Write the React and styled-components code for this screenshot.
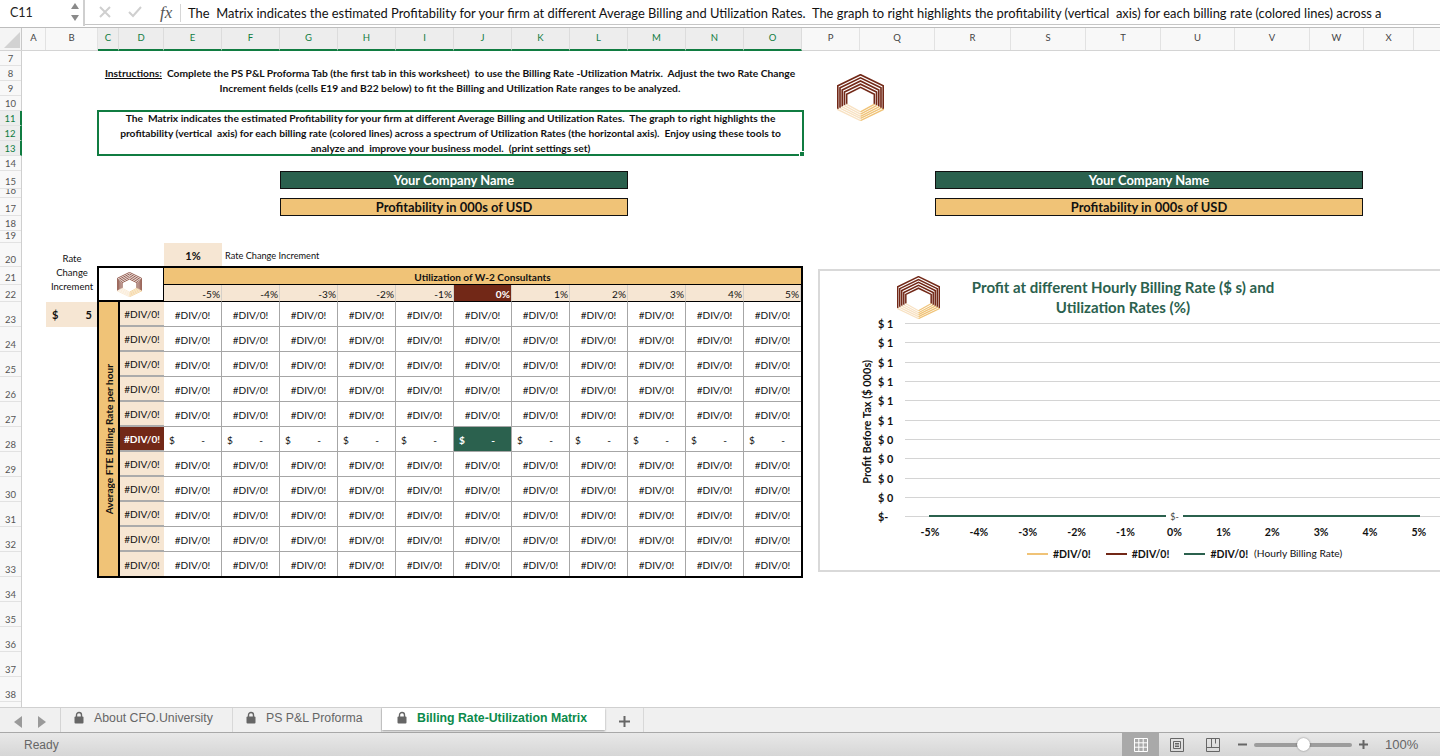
import React from "react";
import styled, { createGlobalStyle } from "styled-components";

const SHEET_FONT = `Lato, "Open Sans", sans-serif`;
const UI_FONT = `"Liberation Sans", Arial, sans-serif`;
const GREEN = "#2b614e";
const MAROON = "#722817";
const GOLD = "#f0c377";
const PEACH = "#f6e6d3";
const SELECT = "#107c41";

const Global = createGlobalStyle`
  html, body { margin: 0; padding: 0; width: 1440px; height: 756px; overflow: hidden; background: #fff; }
  * { box-sizing: border-box; }
`;

const Page = styled.div`
  width: 1440px;
  height: 756px;
  display: flex;
  flex-direction: column;
  overflow: hidden;
  font-family: ${SHEET_FONT};
  color: #111;
`;

/* ---------- formula bar ---------- */
const FormulaBar = styled.div`
  height: 28px;
  flex: none;
  display: flex;
  align-items: flex-start;
  overflow: hidden;
  background: #fff;
  border-bottom: 1px solid #bdbdbd;
  box-shadow: inset 0 -2px 0 #fff, inset 0 -3px 0 #c6c6c6;
`;
const NameBox = styled.div`
  width: 85px;
  height: 26px;
  flex: none;
  display: flex;
  align-items: center;
  justify-content: space-between;
  padding: 0 3px 2px 10px;
  border-right: 2px solid #cfcfcf;
  background: #fff;
  font-size: 12.5px;
  color: #222;
`;
const ActionIcon = styled.svg`
  flex: none;
  margin-top: 6px;
  margin-left: ${(p) => p.$gap}px;
`;
const FxLabel = styled.span`
  flex: none;
  font-family: "Liberation Serif", serif;
  font-style: italic;
  font-size: 17px;
  color: #555;
  width: 18px;
  margin: 3px 0 0 18px;
`;
const FxRule = styled.div`
  flex: none;
  width: 1px;
  height: 18px;
  margin: 4px 7px 0 2px;
  background: #d6d6d6;
`;
const FormulaText = styled.div`
  flex: none;
  font-size: 12.91px;
  line-height: 26px;
  white-space: pre;
  color: #111;
`;

/* ---------- column headers ---------- */
const ColumnBar = styled.div`
  height: 23px;
  flex: none;
  display: flex;
  background: #f8f8f8;
  border-bottom: 1px solid #d4d4d4;
`;
const Corner = styled.div`
  width: 22px;
  flex: none;
  background: #f4f4f4;
  border-right: 1px solid #c8c8c8;
  position: relative;
  padding: 4px 2px 2px 4px;
`;
const ColumnHead = styled.div`
  flex: none;
  width: ${(p) => p.$w}px;
  text-align: center;
  font-size: 9.5px;
  line-height: 20px;
  color: ${(p) => (p.$on ? SELECT : "#444")};
  background: ${(p) => (p.$on ? "#ededed" : "#f8f8f8")};
  border-right: 1px solid ${(p) => (p.$on ? "#dcdcdc" : "#e2e2e2")};
  border-bottom: ${(p) => (p.$on ? `2px solid ${SELECT}` : "none")};
  height: ${(p) => (p.$on ? "23px" : "22px")};
`;

/* ---------- body ---------- */
const Body = styled.div`
  display: flex;
  height: 656px;
  flex: none;
  overflow: hidden;
`;
const RowRail = styled.div`
  width: 22px;
  flex: none;
  background: #f8f8f8;
  border-right: 1px solid #cfcfcf;
`;
const RowHead = styled.div`
  height: ${(p) => p.$h}px;
  display: flex;
  align-items: flex-end;
  justify-content: center;
  overflow: hidden;
  font-size: 9.5px;
  line-height: 10px;
  padding-bottom: 1px;
  color: ${(p) => (p.$on ? SELECT : "#555")};
  background: ${(p) => (p.$on ? "#ededed" : "transparent")};
  border-bottom: 1px solid #e2e2e2;
  border-right: ${(p) => (p.$on ? `2px solid ${SELECT}` : "none")};
  margin-right: ${(p) => (p.$on ? "-1px" : "0")};
`;
const Sheet = styled.div`
  position: relative;
  flex: 1;
  overflow: hidden;
  display: grid;
  grid-template-columns: ${(p) => p.$cols};
  grid-template-rows: ${(p) => p.$rows};
  background: #fff;
`;
const Instructions = styled.div`
  grid-column: 3 / 16;
  grid-row: 2 / 4;
  text-align: center;
  font-size: 10.25px;
  font-weight: 700;
  line-height: 15px;
  white-space: pre;
`;
const Underlined = styled.span`
  text-decoration: underline;
`;
const NoteBox = styled.div`
  grid-column: 3 / 16;
  grid-row: 5 / 8;
  position: relative;
  margin: -1px -2px 0 -1px;
  border: 2px solid ${SELECT};
  text-align: center;
  font-size: 10.25px;
  font-weight: 700;
  line-height: 15px;
  white-space: pre;
  display: flex;
  align-items: center;
  justify-content: center;
`;
const FillHandle = styled.i`
  position: absolute;
  right: -3px;
  bottom: -3px;
  width: 6px;
  height: 6px;
  background: ${SELECT};
  border: 1px solid #fff;
`;
const TitleBar = styled.div`
  grid-column: ${(p) => p.$col};
  grid-row: ${(p) => p.$row};
  display: flex;
  align-items: center;
  justify-content: center;
  margin-right: ${(p) => p.$trim || 0}px;
  border: 1px solid #111;
  font-size: 12.9px;
  font-weight: 700;
  background: ${(p) => (p.$dark ? GREEN : GOLD)};
  color: ${(p) => (p.$dark ? "#fff" : "#111")};
`;
const IncrementCell = styled.div`
  grid-column: 5;
  grid-row: 14;
  background: ${PEACH};
  display: flex;
  align-items: center;
  justify-content: center;
  font-size: 11px;
  font-weight: 700;
`;
const IncrementNote = styled.div`
  grid-column: 6 / 9;
  grid-row: 14;
  display: flex;
  align-items: center;
  padding-left: 3px;
  font-size: 9.2px;
  white-space: nowrap;
`;
const RateNote = styled.div`
  grid-column: 2;
  grid-row: 14 / 17;
  display: flex;
  align-items: center;
  justify-content: center;
  text-align: center;
  font-size: 9.5px;
  line-height: 14px;
  padding-top: 1px;
`;
const RateInput = styled.div`
  grid-column: 2;
  grid-row: 17;
  background: ${PEACH};
  display: flex;
  align-items: center;
  justify-content: space-between;
  padding: 0 6px;
  font-size: 11px;
  font-weight: 700;
`;

/* ---------- matrix ---------- */
const Matrix = styled.div`
  grid-column: 3 / 16;
  grid-row: 15 / 28;
  margin: -1px -1px -1px -1px;
  border: 2px solid #000;
  display: grid;
  grid-template-columns: 21px 44px repeat(10, 58px) 57px;
  grid-template-rows: 17px 17px repeat(10, 25px) 24px;
  font-size: 10.1px;
`;
const LogoCell = styled.div`
  grid-column: 1 / 3;
  grid-row: 1 / 3;
  display: flex;
  align-items: center;
  justify-content: center;
  border-right: 2px solid #000;
  border-bottom: 2px solid #000;
  margin-right: -1px;
  padding-right: 4px;
`;
const AxisTop = styled.div`
  grid-column: 3 / 14;
  grid-row: 1;
  background: ${GOLD};
  border-bottom: 1.5px solid #000;
  display: flex;
  align-items: center;
  justify-content: center;
  font-weight: 700;
  padding-top: 2px;
`;
const PctCell = styled.div`
  background: ${(p) => (p.$on ? MAROON : PEACH)};
  color: ${(p) => (p.$on ? "#fff" : "#111")};
  font-weight: ${(p) => (p.$on ? 700 : 400)};
  border-right: 1px solid #d6d0c8;
  border-bottom: 1px solid #000;
  display: flex;
  align-items: center;
  justify-content: flex-end;
  padding: 1px 1px 0 0;
`;
const AxisSide = styled.div`
  grid-column: 1;
  grid-row: 3 / 14;
  background: ${GOLD};
  border-right: 2px solid #000;
  display: flex;
  align-items: center;
  justify-content: center;
`;
const AxisSideText = styled.span`
  writing-mode: vertical-rl;
  transform: rotate(180deg);
  font-weight: 700;
  white-space: nowrap;
`;
const RateCell = styled.div`
  background: ${(p) => (p.$on ? MAROON : PEACH)};
  color: ${(p) => (p.$on ? "#fff" : "#111")};
  font-weight: ${(p) => (p.$on ? 700 : 400)};
  border-bottom: ${(p) => (p.$last ? "none" : "2px solid #ababab")};
  display: flex;
  align-items: center;
  justify-content: center;
  padding-top: 1px;
  white-space: nowrap;
`;
const ValueCell = styled.div`
  background: ${(p) => (p.$on ? GREEN : "#fff")};
  color: ${(p) => (p.$on ? "#fff" : "#111")};
  font-weight: ${(p) => (p.$on ? 700 : 400)};
  border-right: ${(p) => (p.$end ? "none" : "1px solid #a6a6a6")};
  border-bottom: ${(p) => (p.$last ? "none" : "1px solid #a6a6a6")};
  display: flex;
  align-items: center;
  justify-content: ${(p) => (p.$money ? "space-between" : "center")};
  padding: ${(p) => (p.$money ? "1px 16px 0 5px" : "2px 0 0")};
  white-space: nowrap;
`;

/* ---------- floating objects ---------- */
const FloatingLogo = styled.div`
  position: absolute;
  left: 815px;
  top: 23px;
  line-height: 0;
`;
const Chart = styled.div`
  position: absolute;
  left: 796px;
  top: 218px;
  width: 640px;
  height: 303px;
  border: 2px solid #d9d9d9;
  background: #fff;
`;
const ChartLogo = styled.div`
  position: absolute;
  left: 77px;
  top: 5px;
  line-height: 0;
`;
const ChartTitle = styled.div`
  padding: 6px 30px 0 0;
  margin-bottom: -3px;
  text-align: center;
  font-size: 15px;
  font-weight: 700;
  line-height: 20px;
  color: ${GREEN};
`;
const Plot = styled.div`
  display: flex;
  position: relative;
`;
const YTitle = styled.div`
  width: 58px;
  flex: none;
  display: flex;
  align-items: center;
  justify-content: flex-end;
  padding: 3px 5px 0 0;
`;
const YTitleText = styled.span`
  writing-mode: vertical-rl;
  transform: rotate(180deg);
  font-size: 11px;
  font-weight: 700;
  white-space: nowrap;
`;
const Ticks = styled.div`
  flex: 1;
  display: grid;
  grid-auto-rows: 19.3px;
`;
const Tick = styled.div`
  display: flex;
  align-items: center;
`;
const TickLabel = styled.span`
  width: 27px;
  flex: none;
  font-size: 10.8px;
  font-weight: 700;
  white-space: pre;
`;
const GridLine = styled.i`
  flex: 1;
  height: 1px;
  background: #d4d4d4;
`;
const Series = styled.i`
  position: absolute;
  left: 109px;
  bottom: 9px;
  width: 491px;
  height: 2px;
  background: ${GREEN};
`;
const ZeroLabel = styled.span`
  position: absolute;
  left: 346px;
  bottom: 3px;
  width: 17px;
  background: #fff;
  text-align: center;
  font-size: 9px;
  line-height: 12px;
  color: #444;
`;
const XAxis = styled.div`
  display: grid;
  grid-template-columns: repeat(11, 48.9px);
  padding-left: 85.5px;
  height: 14px;
`;
const XLabel = styled.span`
  text-align: center;
  font-size: 10.6px;
  font-weight: 700;
  line-height: 12px;
`;
const Legend = styled.div`
  display: flex;
  align-items: center;
  padding: 4px 0 0 207px;
  height: 24px;
`;
const LegendKey = styled.i`
  width: 21px;
  height: 2px;
  margin-right: 5px;
  background: ${(p) => p.$c};
`;
const LegendLabel = styled.span`
  font-size: 10.5px;
  font-weight: 700;
  margin-right: 15px;
`;
const LegendNote = styled.span`
  font-size: 10.2px;
  margin: -2px 0 0 -9px;
  white-space: nowrap;
`;

/* ---------- tabs ---------- */
const TabBar = styled.div`
  height: 26px;
  flex: none;
  display: flex;
  background: #f0f0f0;
  border-top: 1px solid #d0d0d0;
  border-bottom: 1px solid #a8a8a8;
  font-family: ${UI_FONT};
`;
const TabNav = styled.div`
  width: 61px;
  flex: none;
  display: flex;
  align-items: center;
  gap: 16px;
  padding: 3px 0 0 14px;
  border-right: 1px solid #d4d4d4;
`;
const Tab = styled.div`
  width: ${(p) => p.$w}px;
  flex: none;
  height: ${(p) => (p.$on ? "22px" : "24px")};
  display: flex;
  align-items: center;
  gap: 10px;
  padding: 0 0 ${(p) => (p.$on ? "3px" : "5px")} ${(p) => (p.$on ? "15px" : "13px")};
  font-size: 12.3px;
  font-weight: ${(p) => (p.$on ? 700 : 400)};
  color: ${(p) => (p.$on ? "#0b8a4b" : "#666")};
  background: ${(p) => (p.$on ? "#fff" : "transparent")};
  border-right: ${(p) => (p.$on ? "none" : "1px solid #d8d8d8")};
  box-shadow: ${(p) => (p.$on ? "0 1px 2px rgba(0,0,0,.35)" : "none")};
  white-space: nowrap;
`;
const AddTab = styled.div`
  width: 39px;
  flex: none;
  height: 24px;
  display: flex;
  align-items: center;
  justify-content: center;
  padding-top: 3px;
  border-right: 1px solid #d8d8d8;
`;
const StatusBar = styled.div`
  flex: 1;
  display: flex;
  align-items: stretch;
  background: linear-gradient(#e8e8e8, #d6d6d6);
  font-family: ${UI_FONT};
  font-size: 12px;
  color: #666;
`;
const StatusText = styled.div`
  flex: 1;
  padding-left: 24px;
  display: flex;
  align-items: center;
`;
const ViewButton = styled.div`
  width: ${(p) => p.$w}px;
  flex: none;
  display: flex;
  align-items: center;
  justify-content: center;
  background: ${(p) => (p.$on ? "#a9a9a9" : "transparent")};
`;
const ZoomRow = styled.div`
  width: 209px;
  flex: none;
  display: flex;
  align-items: center;
  padding-left: 7px;
`;
const Track = styled.div`
  position: relative;
  width: 98px;
  height: 4px;
  border-radius: 2px;
  background: #9c9c9c;
  margin: 0 7px;
`;
const Thumb = styled.i`
  position: absolute;
  left: 43px;
  top: -4.5px;
  width: 13px;
  height: 13px;
  border-radius: 50%;
  background: #fff;
  box-shadow: 0 0 2px rgba(0,0,0,.45);
`;
const Percent = styled.span`
  font-size: 13px;
  margin-left: 17px;
  color: #666;
`;

/* ---------- drawings ---------- */
const band = (i) => {
  const d = i * 4.7;
  return `M${1.7 + d} ${75 - d * 0.55}V${25 + d * 0.95}L50 ${1.5 + d * 1.43}L${98.3 - d} ${25 + d * 0.95}V${75 - d * 0.55}`;
};
const leftFace = (i) => {
  const t = i / 4.4;
  return `M${22 * t} ${75 - 12 * t}L50 ${99 - 20 * t}`;
};
const rightFace = (i) => {
  const t = i / 4.4;
  return `M50 ${99 - 20 * t}L${100 - 22 * t} ${75 - 12 * t}`;
};
const Logo = ({ size = 47, fade = 1 }) => (
  <svg width={size} height={size} viewBox="0 0 100 100" opacity={fade} fill="none">
    {[0, 1, 2, 3, 4].map((i) => (
      <path key={i} d={band(i)} stroke={MAROON} strokeWidth="3.5" strokeLinejoin="miter" />
    ))}
    {[0, 1, 2, 3, 4].map((i) => (
      <path key={i} d={leftFace(i)} stroke="#f8e2c3" strokeWidth="3" />
    ))}
    {[0, 1, 2, 3, 4].map((i) => (
      <path key={i} d={rightFace(i)} stroke={GOLD} strokeWidth="3" />
    ))}
  </svg>
);
const LockIcon = () => (
  <svg width="10" height="13" viewBox="0 0 10 13" style={{ flex: "none" }}>
    <path d="M2.5 6V4a2.5 2.5 0 0 1 5 0v2" fill="none" stroke="#666" strokeWidth="1.4" />
    <rect x="0.5" y="5.5" width="9" height="7" rx="1" fill="#666" />
  </svg>
);
const NavArrow = ({ right }) => (
  <svg width="8" height="12" viewBox="0 0 8 12">
    <path d={right ? "M0 0L8 6L0 12Z" : "M8 0L0 6L8 12Z"} fill="#9a9a9a" />
  </svg>
);

const COLS = [
  ["A", 24], ["B", 52], ["C", 21], ["D", 45], ["E", 58], ["F", 58], ["G", 58], ["H", 58], ["I", 58], ["J", 58],
  ["K", 58], ["L", 58], ["M", 58], ["N", 58], ["O", 58], ["P", 58], ["Q", 75], ["R", 76], ["S", 75], ["T", 75],
  ["U", 74], ["V", 75], ["W", 54], ["X", 50],
];
const ON_COLS = "CDEFGHIJKLMNO";
const ROW_H = { 15: 18, 16: 9, 17: 18, 18: 15, 19: 12, 20: 24, 21: 18, 22: 17 };
const rowHeight = (n) => (n <= 14 ? 15 : n <= 22 ? ROW_H[n] : 25);
const ROWS = Array.from({ length: 32 }, (_, i) => i + 7);
const PCTS = ["-5%", "-4%", "-3%", "-2%", "-1%", "0%", "1%", "2%", "3%", "4%", "5%"];
const TICKS = ["$ 1", "$ 1", "$ 1", "$ 1", "$ 1", "$ 1", "$ 0", "$ 0", "$ 0", "$ 0", "$-"];
const DATA_ROWS = Array.from({ length: 11 }, (_, i) => i);

export default function App() {
  return (
    <Page>
      <Global />
      <FormulaBar>
        <NameBox>
          C11
          <svg width="10" height="20" viewBox="0 0 10 20">
            <path d="M5 1L9 7H1Z" fill="#8a8a8a" />
            <path d="M5 19L9 13H1Z" fill="#8a8a8a" />
          </svg>
        </NameBox>
        <ActionIcon $gap={14} width="12" height="12" viewBox="0 0 12 12">
          <path d="M1 1L11 11M11 1L1 11" stroke="#cfcfcf" strokeWidth="2" />
        </ActionIcon>
        <ActionIcon $gap={17} width="14" height="12" viewBox="0 0 14 12">
          <path d="M1 6L5 10L13 1" stroke="#cfcfcf" strokeWidth="2" fill="none" />
        </ActionIcon>
        <FxLabel>fx</FxLabel>
        <FxRule />
        <FormulaText>
          {"The  Matrix indicates the estimated Profitability for your firm at different Average Billing and Utilization Rates.  The graph to right highlights the profitability (vertical  axis) for each billing rate (colored lines) across a"}
        </FormulaText>
      </FormulaBar>

      <ColumnBar>
        <Corner>
          <svg width="16" height="16" viewBox="0 0 16 16">
            <path d="M16 0V16H0Z" fill="#d2d2d2" />
          </svg>
        </Corner>
        {COLS.map(([name, w]) => (
          <ColumnHead key={name} $w={w} $on={ON_COLS.includes(name)}>
            {name}
          </ColumnHead>
        ))}
      </ColumnBar>

      <Body>
        <RowRail>
          {ROWS.map((n) => (
            <RowHead key={n} $h={rowHeight(n)} $on={n >= 11 && n <= 13}>
              {n}
            </RowHead>
          ))}
        </RowRail>
        <Sheet
          $cols={COLS.map(([, w]) => `${w}px`).join(" ")}
          $rows={ROWS.map((n) => `${rowHeight(n)}px`).join(" ") + " 5px"}
        >
          <Instructions>
            <Underlined>Instructions:</Underlined>
            {"  Complete the PS P&L Proforma Tab (the first tab in this worksheet)  to use the Billing Rate -Utilization Matrix.  Adjust the two Rate Change\nIncrement fields (cells E19 and B22 below) to fit the Billing and Utilization Rate ranges to be analyzed."}
          </Instructions>
          <NoteBox>
            {"The  Matrix indicates the estimated Profitability for your firm at different Average Billing and Utilization Rates.  The graph to right highlights the\nprofitability (vertical  axis) for each billing rate (colored lines) across a spectrum of Utilization Rates (the horizontal axis).  Enjoy using these tools to\nanalyze and  improve your business model.  (print settings set)"}
            <FillHandle />
          </NoteBox>

          <TitleBar $col="7 / 13" $row="9" $dark>Your Company Name</TitleBar>
          <TitleBar $col="7 / 13" $row="11">Profitability in 000s of USD</TitleBar>
          <TitleBar $col="18 / 24" $row="9" $trim={1} $dark>Your Company Name</TitleBar>
          <TitleBar $col="18 / 24" $row="11" $trim={1}>Profitability in 000s of USD</TitleBar>

          <IncrementCell>1%</IncrementCell>
          <IncrementNote>Rate Change Increment</IncrementNote>
          <RateNote>Rate<br />Change<br />Increment</RateNote>
          <RateInput><span>$</span><span>5</span></RateInput>

          <Matrix>
            <LogoCell><Logo size={25} fade={0.85} /></LogoCell>
            <AxisTop>Utilization of W-2 Consultants</AxisTop>
            <AxisSide><AxisSideText>Average FTE Billing Rate per hour</AxisSideText></AxisSide>
            {PCTS.map((p, i) => (
              <PctCell key={p} $on={i === 5}>{p}</PctCell>
            ))}
            {DATA_ROWS.map((r) => (
              <React.Fragment key={r}>
                <RateCell $on={r === 5} $last={r === 10}>#DIV/0!</RateCell>
                {PCTS.map((p, c) =>
                  r === 5 ? (
                    <ValueCell key={p} $money $on={c === 5} $end={c === 10}>
                      <span>$</span><span>-</span>
                    </ValueCell>
                  ) : (
                    <ValueCell key={p} $end={c === 10} $last={r === 10}>
                      #DIV/0!
                    </ValueCell>
                  )
                )}
              </React.Fragment>
            ))}
          </Matrix>

          <FloatingLogo><Logo /></FloatingLogo>

          <Chart>
            <ChartLogo><Logo size={43} /></ChartLogo>
            <ChartTitle>
              Profit at different Hourly Billing Rate ($ s) and<br />Utilization Rates (%)
            </ChartTitle>
            <Plot>
              <YTitle><YTitleText>Profit Before Tax ($ 000s)</YTitleText></YTitle>
              <Ticks>
                {TICKS.map((t, i) => (
                  <Tick key={i}>
                    <TickLabel>{t}</TickLabel>
                    <GridLine />
                  </Tick>
                ))}
              </Ticks>
              <Series />
              <ZeroLabel>$-</ZeroLabel>
            </Plot>
            <XAxis>
              {PCTS.map((p) => <XLabel key={p}>{p}</XLabel>)}
            </XAxis>
            <Legend>
              <LegendKey $c={GOLD} /><LegendLabel>#DIV/0!</LegendLabel>
              <LegendKey $c={MAROON} /><LegendLabel>#DIV/0!</LegendLabel>
              <LegendKey $c={GREEN} /><LegendLabel>#DIV/0!</LegendLabel>
              <LegendNote>(Hourly Billing Rate)</LegendNote>
            </Legend>
          </Chart>
        </Sheet>
      </Body>

      <TabBar>
        <TabNav><NavArrow /><NavArrow right /></TabNav>
        <Tab $w={172}><LockIcon />About CFO.University</Tab>
        <Tab $w={149}><LockIcon />PS P&amp;L Proforma</Tab>
        <Tab $w={223} $on><LockIcon />Billing Rate-Utilization Matrix</Tab>
        <AddTab>
          <svg width="11" height="11" viewBox="0 0 11 11">
            <path d="M5.5 0V11M0 5.5H11" stroke="#666" strokeWidth="2" />
          </svg>
        </AddTab>
      </TabBar>
      <StatusBar>
        <StatusText>Ready</StatusText>
        <ViewButton $w={37} $on>
          <svg width="14" height="14" viewBox="0 0 14 14" fill="none" stroke="#fff" strokeWidth="1">
            <path d="M.5.5h13v13H.5zM.5 4.8h13M.5 9.2h13M4.8.5v13M9.2.5v13" />
          </svg>
        </ViewButton>
        <ViewButton $w={36}>
          <svg width="14" height="14" viewBox="0 0 14 14" fill="none" stroke="#666" strokeWidth="1">
            <path d="M.5.5h13v13H.5zM3.5 3.5h7v7h-7zM5 5.5h4M5 7h4M5 8.5h4" />
          </svg>
        </ViewButton>
        <ViewButton $w={36}>
          <svg width="14" height="14" viewBox="0 0 14 14" fill="none" stroke="#666" strokeWidth="1">
            <path d="M.5.5h13v13H.5zM.5 9.5h13M5.5.5v9M9.5.5v5" />
          </svg>
        </ViewButton>
        <ZoomRow>
          <svg width="9" height="9" viewBox="0 0 9 9"><path d="M0 4.5H9" stroke="#666" strokeWidth="2" /></svg>
          <Track><Thumb /></Track>
          <svg width="9" height="9" viewBox="0 0 9 9"><path d="M0 4.5H9M4.5 0V9" stroke="#666" strokeWidth="2" /></svg>
          <Percent>100%</Percent>
        </ZoomRow>
      </StatusBar>
    </Page>
  );
}
